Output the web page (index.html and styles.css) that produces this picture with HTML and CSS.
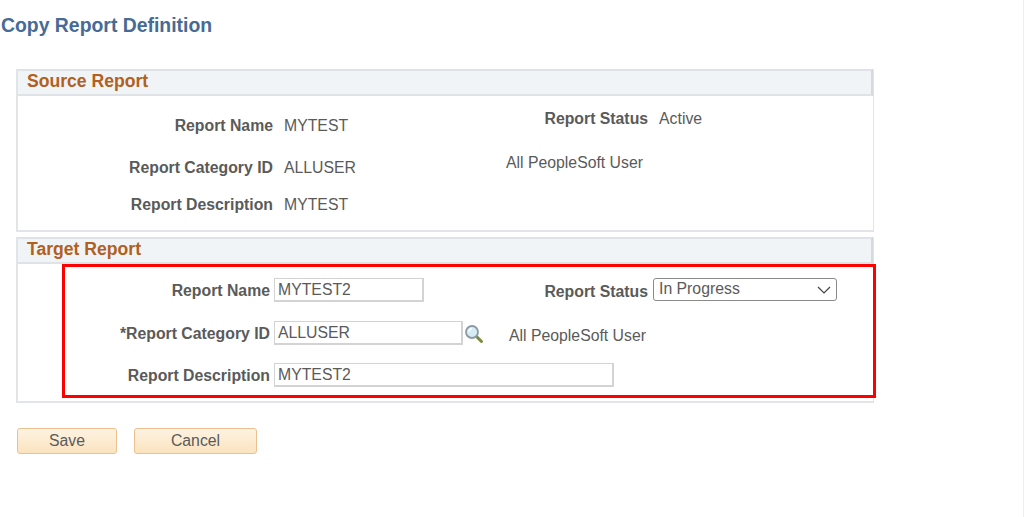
FILE: index.html
```html
<!DOCTYPE html>
<html lang="en">
<head>
<meta charset="utf-8">
<title>Copy Report Definition</title>
<link rel="stylesheet" href="styles.css">
</head>
<body>
<main class="page">
  <h1 class="title">Copy Report Definition</h1>

  <section class="panel panel-source">
    <h2 class="panel-head">Source Report</h2>
    <div class="panel-body source-body">
      <div class="col source-left">
        <div class="row row-sn"><span class="label">Report Name</span><span class="value">MYTEST</span></div>
        <div class="row row-sc"><span class="label">Report Category ID</span><span class="value">ALLUSER</span></div>
        <div class="row row-sd"><span class="label">Report Description</span><span class="value">MYTEST</span></div>
      </div>
      <div class="col source-right">
        <div class="row"><span class="label label-status">Report Status</span><span class="value">Active</span></div>
        <div class="cat-desc">All PeopleSoft User</div>
      </div>
    </div>
  </section>

  <section class="panel panel-target">
    <h2 class="panel-head">Target Report</h2>
    <div class="panel-body target-body">
      <div class="highlight"></div>
      <div class="col target-left">
        <div class="row row-t"><label class="label">Report Name</label><input class="field field-name" value="MYTEST2"></div>
        <div class="row row-t row-tc"><label class="label">*Report Category ID</label><input class="field field-cat" value="ALLUSER">
          <svg class="lookup" width="20" height="20" viewBox="0 0 20 20" aria-hidden="true">
            <path d="M12.5 12.5l5 5" stroke="#7d8a3c" stroke-width="3" stroke-linecap="round"/>
            <circle cx="8" cy="8" r="6" fill="#d6ecf5" stroke="#8b9aa3" stroke-width="1.8"/>
            <path d="M4.8 8a3.2 3.2 0 0 1 3.2-3.2" fill="none" stroke="#fff" stroke-width="1.4"/>
          </svg>
          <span class="value cat-target">All PeopleSoft User</span></div>
        <div class="row row-t row-td"><label class="label">Report Description</label><input class="field field-desc" value="MYTEST2"></div>
      </div>
      <div class="col target-right">
        <div class="row"><label class="label label-status">Report Status</label>
          <div class="select"><span>In Progress</span>
            <svg class="chev" width="14" height="8" viewBox="0 0 14 8" aria-hidden="true"><path d="M1 1l6 6 6-6" fill="none" stroke="#444" stroke-width="1.2"/></svg>
          </div>
        </div>
      </div>
    </div>
  </section>

  <div class="actions">
    <button class="btn btn-save" type="button">Save</button>
    <button class="btn btn-cancel" type="button">Cancel</button>
  </div>
</main>
</body>
</html>
```

FILE: styles.css
```css
* { box-sizing: border-box; }
html, body { margin: 0; padding: 0; background: #fff; }
body {
  width: 1024px;
  height: 517px;
  overflow: hidden;
  border-right: 1px solid #eeeeee;
  font-family: "Liberation Sans", Arial, sans-serif;
  font-size: 15.8px;
  color: #5a5a5a;
}
.page { padding: 14px 0 0 1px; }
.title {
  margin: 0 0 33px;
  font-size: 19.4px;
  line-height: 22px;
  font-weight: bold;
  color: #476a96;
}
.panel {
  margin-left: 15px;
  width: 858px;
  border: 2px solid #e1e5ea;
  border-top: 0;
  border-right-width: 1px;
  border-bottom-width: 2px;
}
.panel-source { height: 163px; margin-bottom: 5px; }
.panel-target { height: 166px; }
.panel-head {
  margin: 0;
  height: 27px;
  padding-left: 9px;
  font-size: 17.6px;
  line-height: 20px;
  font-weight: bold;
  color: #b25f21;
  background: #f1f4f6;
  border-top: 2px solid #dfe3e8;
  border-bottom: 2px solid #dfe3e8;
  border-right: 2px solid #d5d9de;
}
.panel-body { display: flex; position: relative; }
.col { display: flex; flex-direction: column; }
.row { display: flex; align-items: center; }
.label { font-weight: bold; text-align: right; white-space: nowrap; }
.value { white-space: nowrap; }

.source-left { width: 338px; padding-top: 19px; }
.source-left .label { width: 255px; margin-right: 11px; }
.row-sn, .row-sc, .row-sd { height: 22px; }
.row-sc { margin-top: 20px; }
.row-sd { margin-top: 15px; }
.source-right { width: 300px; padding-top: 14px; }
.label-status { width: 142px; }
.source-right .label-status { margin-right: 11px; margin-left: 188.5px; }
.cat-desc { margin-top: 24px; margin-left: 150px; line-height: 22px; white-space: nowrap; }

.target-left { width: 338px; padding-top: 14px; }
.target-left .label { width: 252px; margin: 2px 4px 0 0; flex: none; }
.row-t { height: 24px; }
.row-tc { margin-top: 19px; }
.row-td { margin-top: 18px; }
.field {
  flex: none;
  height: 24px;
  padding: 0 3px 0 3px;
  border: 2px solid #d3d3d3;
  border-width: 1px 2px 2px 1px;
  border-radius: 0;
  font: 15.8px "Liberation Sans", Arial, sans-serif;
  color: #5a5a5a;
  background: #fff;
  outline: 0;
}
.field-name { width: 150px; }
.field-cat { width: 189px; }
.field-desc { width: 340px; }
.lookup { flex: none; margin: 1px 0 0 1px; }
.cat-target { margin: 6px 0 0 25px; }
.target-right { padding-top: 14px; width: 500px; position: relative; left: 150px; }
.target-right .label-status { margin: 5px 5px 0 0; }
.select {
  flex: none;
  width: 184px;
  height: 23px;
  display: flex;
  align-items: center;
  justify-content: space-between;
  padding: 0 5px 1px 5px;
  border: 1px solid #8a8a8a;
  border-radius: 3px;
  background: #fff;
}
.chev { margin-top: 1px; }
.highlight {
  position: absolute;
  left: 44px;
  top: 0;
  width: 814px;
  height: 134px;
  border: 3px solid #ff0000;
  z-index: 1;
  pointer-events: none;
}
.actions { display: flex; gap: 17px; margin: 25px 0 0 16px; }
.btn {
  height: 26px;
  padding: 0;
  border: 1px solid #ecc08f;
  border-radius: 3px;
  font: 15.8px "Liberation Sans", Arial, sans-serif;
  color: #5a5a5a;
  background: linear-gradient(#fdf3e2, #fbe3bf);
}
.btn-save { width: 100px; }
.btn-cancel { width: 123px; }
```
